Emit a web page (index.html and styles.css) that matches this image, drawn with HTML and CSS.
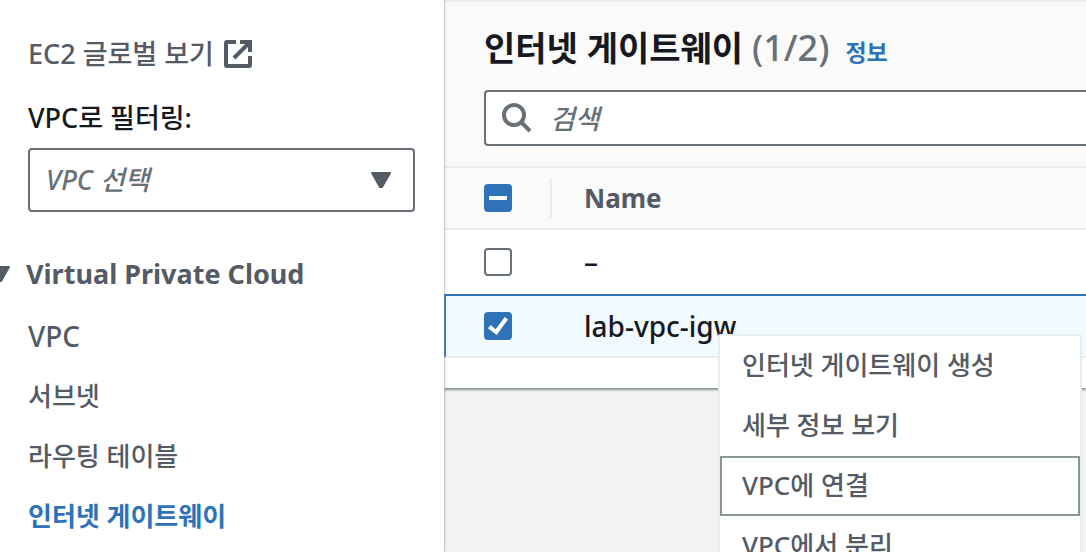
FILE: index.html
```html
<!doctype html>
<html lang="ko">

<head>
    <meta charset="UTF-8">
    <meta name="viewport" content="width=device-width, initial-scale=1.0">
    <title>인터넷 게이트웨이</title>
    <link rel="stylesheet" href="styles.css">
</head>

<body>
    <nav class="sidebar">
        <a class="global-view" href="#">EC2 글로벌 보기
            <svg class="icon-external" viewBox="0 0 28 28" aria-hidden="true">
                <path d="M12 2H3a1 1 0 0 0-1 1v22a1 1 0 0 0 1 1h22a1 1 0 0 0 1-1v-9" />
                <path d="M16 2h10v10M25 3L10 18" />
            </svg>
        </a>

        <label class="filter-label" for="vpcFilter">VPC로 필터링:</label>
        <div class="select-box">
            <select id="vpcFilter">
                <option>VPC 선택</option>
            </select>
            <svg class="arrow" viewBox="0 0 20 16" aria-hidden="true">
                <path d="M1 1h18l-8 14H9z" />
            </svg>
        </div>

        <button class="section-title" type="button">
            <svg class="arrow" viewBox="0 0 20 16" aria-hidden="true">
                <path d="M1 1h18l-8 14H9z" />
            </svg>
            Virtual Private Cloud
        </button>
        <ul class="nav-list">
            <li><a class="latin" href="#">VPC</a></li>
            <li><a href="#">서브넷</a></li>
            <li><a href="#">라우팅 테이블</a></li>
            <li><a class="active" href="#">인터넷 게이트웨이</a></li>
        </ul>
    </nav>

    <main class="content">
        <section class="panel">
            <header class="panel-header">
                <div class="title-row">
                    <h1>인터넷 게이트웨이 <span class="counter">(1/2)</span></h1>
                    <a class="info" href="#">정보</a>
                </div>
                <div class="search">
                    <svg class="icon-search" viewBox="0 0 30 30" aria-hidden="true">
                        <circle cx="12" cy="12" r="10" />
                        <path d="M19 19l9 9" />
                    </svg>
                    <input type="text" placeholder="검색" aria-label="검색">
                </div>
            </header>

            <table>
                <thead>
                    <tr>
                        <th class="check-col">
                            <div class="divider"><input class="partial" type="checkbox" aria-label="모두 선택"></div>
                        </th>
                        <th>Name</th>
                    </tr>
                </thead>
                <tbody>
                    <tr>
                        <td class="check-col"><input type="checkbox" aria-label="–"></td>
                        <td class="latin">–</td>
                    </tr>
                    <tr class="selected">
                        <td class="check-col"><input type="checkbox" aria-label="lab-vpc-igw" checked></td>
                        <td class="latin menu-anchor">lab-vpc-igw
                            <div class="menu" role="menu">
                                <button type="button" role="menuitem">인터넷 게이트웨이 생성</button>
                                <button type="button" role="menuitem">세부 정보 보기</button>
                                <button class="focused" type="button" role="menuitem">VPC에 연결</button>
                                <button type="button" role="menuitem">VPC에서 분리</button>
                            </div>
                        </td>
                    </tr>
                </tbody>
            </table>
        </section>
    </main>
</body>

</html>
```
FILE: styles.css
```css
* {
    box-sizing: border-box;
    font-family: "Noto Sans", "Noto Sans CJK KR", sans-serif;
}

body {
    margin: 0;
    height: 100vh;
    display: flex;
    overflow: hidden;
    background: #f2f3f3;
    color: #16191f;
    font-size: 26px;
    font-weight: 500;
}

a {
    color: #545b64;
    text-decoration: none;
}

button {
    border: none;
    background: none;
    cursor: pointer;
}

.latin {
    font-size: 28px;
}

/* sidebar */
.sidebar {
    flex: 0 0 444px;
    padding: 24px 29px 0 28px;
    background: white;
    box-shadow: 0 0 3px #879196;
    z-index: 1;
}

.global-view {
    display: flex;
    align-items: center;
    gap: 10px;
    font-size: 27px;
    line-height: 60px;
}

.icon-external {
    width: 28px;
    height: 28px;
    fill: none;
    stroke: #545b64;
    stroke-width: 4;
}

.filter-label {
    display: block;
    margin: 16px 0 12px;
    font-size: 27px;
    line-height: 36px;
}

.select-box {
    display: grid;
    align-items: center;
}

.select-box > * {
    grid-area: 1 / 1;
}

select {
    appearance: none;
    width: 100%;
    height: 64px;
    padding: 0 60px 2px 16px;
    border: 2px solid #687078;
    border-radius: 4px;
    background: white;
    color: #687078;
    font-size: 27px;
    font-style: italic;
    font-weight: 500;
}

.arrow {
    flex: none;
    width: 20px;
    height: 16px;
    fill: #545b64;
    stroke: #545b64;
    stroke-width: 2;
    stroke-linejoin: round;
    pointer-events: none;
}

.select-box .arrow {
    justify-self: end;
    margin-right: 24px;
}

.section-title {
    display: flex;
    align-items: center;
    gap: 16px;
    margin: 42px 0 12px -38px;
    padding: 0;
    color: #545b64;
    font-size: 27px;
    font-weight: bold;
    line-height: 40px;
    white-space: nowrap;
}

.nav-list {
    margin: 0;
    padding: 0;
    list-style: none;
    line-height: 60px;
}

.nav-list li {
    height: 60px;
}

.nav-list .active {
    color: #2e73b8;
    font-weight: bold;
}

/* gateway table */
.content {
    flex: 1;
    min-width: 0;
}

.panel {
    padding-bottom: 30px;
    border-top: 2px solid #eaeded;
    background: white;
    box-shadow: 0 2px 2px #879196;
}

.panel-header {
    padding: 16px 0 20px 40px;
    border-bottom: 2px solid #eaeded;
    background: #fafafa;
}

.title-row {
    display: flex;
    align-items: baseline;
    gap: 16px;
    height: 60px;
    margin-bottom: 12px;
}

h1 {
    margin: 0;
    font-size: 34px;
    line-height: 60px;
}

.counter {
    color: #687078;
    font-size: 36px;
    font-weight: 500;
    line-height: 40px;
}

.info {
    color: #2e73b8;
    font-size: 23px;
    font-weight: bold;
}

.search {
    display: flex;
    align-items: center;
    gap: 18px;
    height: 56px;
    padding-left: 16px;
    border: 2px solid #687078;
    border-right: none;
    border-radius: 4px 0 0 4px;
    background: white;
}

.icon-search {
    flex: none;
    width: 30px;
    height: 30px;
    fill: none;
    stroke: #687078;
    stroke-width: 4;
}

.search input {
    flex: 1;
    min-width: 0;
    padding: 0;
    border: none;
    outline: none;
    background: none;
    font-size: 27px;
    font-weight: 500;
}

.search input::placeholder {
    color: #687078;
    font-style: italic;
}

table {
    width: 100%;
    border-collapse: separate;
    border-spacing: 0;
}

th,
td {
    height: 64px;
    padding: 0 0 0 32px;
    text-align: left;
    line-height: 36px;
}

th {
    height: 62px;
    border-bottom: 2px solid #eaeded;
    background: #fafafa;
    color: #545b64;
}

.check-col {
    width: 108px;
    padding-left: 40px;
}

.divider {
    display: flex;
    align-items: center;
    height: 40px;
    border-right: 2px solid #eaeded;
}

.selected td {
    border-top: 2px solid #2e73b8;
    border-bottom: 2px solid #eaeded;
    background: #f1faff;
}

.selected .check-col {
    border-left: 2px solid #2e73b8;
    padding-left: 38px;
}

input[type="checkbox"] {
    appearance: none;
    display: grid;
    place-items: center;
    width: 28px;
    height: 28px;
    margin: 0;
    border: 2px solid #687078;
    border-radius: 4px;
    background: white;
}

input[type="checkbox"]:checked,
input.partial {
    border-color: #2e73b8;
    background: #2e73b8;
}

input[type="checkbox"]:checked::before {
    content: "";
    width: 20px;
    height: 18px;
    background: white;
    clip-path: polygon(0 62%, 14% 45%, 38% 68%, 84% 0, 100% 14%, 43% 100%);
}

input.partial::before {
    content: "";
    width: 18px;
    height: 4px;
    background: white;
}

/* context menu */
.menu-anchor {
    position: relative;
}

.menu {
    position: absolute;
    top: 38px;
    left: 166px;
    width: 364px;
    border: 2px solid #eaeded;
    border-radius: 2px;
    background: white;
}

.menu button {
    display: block;
    width: 100%;
    height: 60px;
    padding: 0 20px 4px;
    border: 2px solid transparent;
    color: #545b64;
    font-size: 26px;
    font-weight: 500;
    text-align: left;
}

.menu .focused {
    border-color: #879596;
}
```
